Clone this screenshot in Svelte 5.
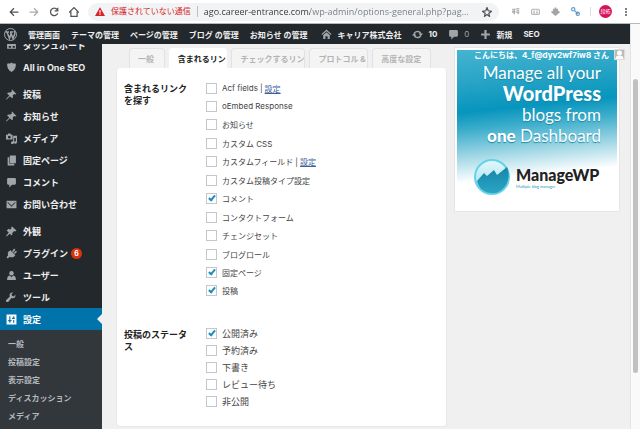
<script>
    let url = $state("ago.career-entrance.com/wp-admin/options-general.php?pag...");

    const adminLinks = ["管理画面", "テーマの管理", "ページの管理", "ブログ の管理", "お知らせ の管理"];

    const menuGroups = [
        [
            { icon: "dashboard", label: "ダッシュボード" },
            { icon: "shield", label: "All in One SEO" }
        ],
        [
            { icon: "pin", label: "投稿" },
            { icon: "pin", label: "お知らせ" },
            { icon: "media", label: "メディア" },
            { icon: "pages", label: "固定ページ" },
            { icon: "comment", label: "コメント" },
            { icon: "mail", label: "お問い合わせ" }
        ],
        [
            { icon: "brush", label: "外観" },
            { icon: "plug", label: "プラグイン", count: 6 },
            { icon: "user", label: "ユーザー" },
            { icon: "wrench", label: "ツール" },
            { icon: "settings", label: "設定", current: true }
        ]
    ];

    const submenu = ["一般", "投稿設定", "表示設定", "ディスカッション", "メディア"];

    const tabs = [
        { label: "一般", size: "short" },
        { label: "含まれるリン", size: "mid" },
        { label: "チェックするリン", size: "long" },
        { label: "プロトコル &", size: "mid" },
        { label: "高度な設定", size: "mid" }
    ];
    let activeTab = $state(1);

    let sources = $state([
        { label: "Acf fields", link: true, checked: false },
        { label: "oEmbed Response", checked: false },
        { label: "お知らせ", checked: false },
        { label: "カスタム CSS", checked: false },
        { label: "カスタムフィールド", link: true, checked: false },
        { label: "カスタム投稿タイプ設定", checked: false },
        { label: "コメント", checked: true },
        { label: "コンタクトフォーム", checked: false },
        { label: "チェンジセット", checked: false },
        { label: "ブログロール", checked: false },
        { label: "固定ページ", checked: true },
        { label: "投稿", checked: true }
    ]);

    let statuses = $state([
        { label: "公開済み", checked: true },
        { label: "予約済み", checked: false },
        { label: "下書き", checked: false },
        { label: "レビュー待ち", checked: false },
        { label: "非公開", checked: false }
    ]);
</script>

{#snippet icon(name)}
    <svg class="icon" viewBox="0 0 20 20" aria-hidden="true">
        {#if name === "dashboard"}
            <path d="M2 3h16v13H2z M5 11h4v3H5z M12 11h4v3h-4z" fill-rule="evenodd" />
        {:else if name === "shield"}
            <path d="M10 1c2 2 5 2 8 2 0 7-2 12-8 15C4 15 2 10 2 3c3 0 6 0 8-2z" />
        {:else if name === "pin"}
            <path d="M11 1l8 8-2 1-2-1-3 3c1 2 1 4-1 5l-4-4-6 6-1-1 6-6-4-4c1-2 4-2 5-1l4-3-1-2z" />
        {:else if name === "media"}
            <path d="M0 3h3l1-2h4l1 2h3v9H0z M6 5a2 2 0 100 5 2 2 0 000-5z" fill-rule="evenodd" />
            <path d="M13 5h7v12c0 4-6 3-5 0 0-1 1-2 3-2V9h-3v8c0 4-6 4-6 1s3-3 4-3z" />
        {:else if name === "pages"}
            <path d="M7 1h11v14H7z M3 4h3v12h9v3H3z" />
        {:else if name === "comment"}
            <path d="M4 2h12c1 0 2 1 2 2v8c0 1-1 2-2 2h-5l-5 5v-5H4c-1 0-2-1-2-2V4c0-1 1-2 2-2z" />
        {:else if name === "mail"}
            <path d="M1 3h18v14H1z M3 5l7 7 7-7v2l-7 7-7-7z" fill-rule="evenodd" />
        {:else if name === "brush"}
            <path d="M11 1l8 7-2 2-2-1-4 4 1 2-2 2-3-3-6 5-1-1 5-6-3-3 2-2 2 1 4-4-1-1z M1 8l4-3 3 2-3 3z" />
        {:else if name === "plug"}
            <path d="M8 4l9 9c-3 4-7 5-10 3l-4 3-2-2 3-4C2 10 4 6 8 4z M11 6l4-5 2 2-4 5z M14 9l4-4 2 2-4 4z" />
        {:else if name === "user"}
            <circle cx="10" cy="6" r="4" />
            <path d="M2 18c0-5 1-7 5-8l3 3 3-3c4 1 5 3 5 8z" />
        {:else if name === "wrench"}
            <path d="M17 5l-3 3-3-1-1-3 3-3c-4-1-8 2-6 7l-7 7c-1 2 2 4 4 3l6-7c5 2 8-2 7-6z" />
        {:else if name === "settings"}
            <path d="M1 1h18v18H1z M6 4v7H4v2h2v3h2v-3h2v-2H8V4z M13 4v3h-2v2h5V7h-1V4z M12 11h3v5h-2v-5z" fill-rule="evenodd" />
        {:else if name === "house"}
            <path d="M10 1l9 8-1 2-8-7-8 7-1-2z M10 6l6 5v7h-4v-5H8v5H4v-7z" />
        {:else if name === "update"}
            <path d="M10 3c4 0 6 2 7 5h3l-4 5-4-5h2c-1-3-7-3-8 0L3 7c1-2 4-4 7-4z M10 17c-4 0-6-2-7-5H0l4-5 4 5H6c1 3 7 3 8 0l3 1c-1 2-4 4-7 4z" />
        {:else if name === "plus"}
            <path d="M8 2h4v6h6v4h-6v6H8v-6H2V8h6z" />
        {/if}
    </svg>
{/snippet}

{#snippet check(item)}
    <div class="option">
        <label>
            <input type="checkbox" bind:checked={item.checked} />
            <span>{item.label}</span>
        </label>
        {#if item.link}
            <span class="bar">|</span><a href="#settings">設定</a>
        {/if}
    </div>
{/snippet}

<div class="window">
    <div class="browser">
        <div class="nav">
            <button aria-label="戻る">
                <svg viewBox="0 0 16 16"><path d="M15 8H2M8 2L2 8l6 6" /></svg>
            </button>
            <button class="dim" aria-label="進む">
                <svg viewBox="0 0 16 16"><path d="M1 8h13M8 2l6 6-6 6" /></svg>
            </button>
            <button aria-label="再読み込み">
                <svg viewBox="0 0 16 16"><path d="M14 10a6 6 0 11-1-6l1 2M14 1v5H9" /></svg>
            </button>
            <button aria-label="ホーム">
                <svg viewBox="0 0 16 16"><path d="M0 9l8-8 8 8M3 7v8h10V7" /></svg>
            </button>
        </div>
        <div class="address">
            <svg class="warn" viewBox="0 0 16 14"><path d="M8 0l8 14H0z" fill="#d8232a" /><path d="M7 5h2v4H7zM7 10h2v2H7z" fill="#fff" /></svg>
            <span class="insecure">保護されていない通信</span>
            <input class="url" type="text" aria-label="アドレス" bind:value={url} />
            <button class="star" aria-label="ブックマーク">
                <svg viewBox="0 0 16 16"><path d="M8 1l2 5 5 1-4 3 1 5-4-3-4 3 1-5-4-3 5-1z" /></svg>
            </button>
        </div>
        <div class="extensions">
            <svg viewBox="0 0 16 16" stroke="#aaa"><path d="M2 4h5l-1 3H2M9 3h6M10 6h4M2 9h5l-2 4M9 9h5l-2 4" /></svg>
            <svg viewBox="0 0 16 16" stroke="#b5b5b5"><rect x="1" y="4" width="14" height="9" rx="2" /><path d="M4 7h3M4 10h3M9 7h3M9 10h3" /></svg>
            <svg viewBox="0 0 16 16" stroke="#a5a5a5"><path d="M8 1v12M5 3v8M11 3v8M1 8l7 6 7-6" stroke-width="3" /></svg>
            <svg viewBox="0 0 16 16"><g stroke="#5a9bd0" stroke-width="2"><circle cx="4" cy="4" r="3" /><path d="M6 6l4 4" /><circle cx="12" cy="12" r="3" /></g><circle cx="11" cy="11" r="1" stroke="#888" /></svg>
        </div>
        <button class="profile">段拓</button>
        <button class="more" aria-label="メニュー">
            <svg viewBox="0 0 4 16"><circle cx="2" cy="2" r="2" /><circle cx="2" cy="8" r="2" /><circle cx="2" cy="14" r="2" /></svg>
        </button>
    </div>

    <div class="page">
        <div class="site">
            <nav class="adminbar">
                <a href="#wp" aria-label="WordPress">
                    <svg class="wp" viewBox="0 0 26 26">
                        <circle cx="13" cy="13" r="12" fill="none" stroke="#a0a5aa" stroke-width="2" />
                        <path d="M3 8h7M12 8h6M6 8l5 13 3-9M13 8l5 13 4-11-2-4" fill="none" stroke="#a0a5aa" stroke-width="3" />
                    </svg>
                </a>
                {#each adminLinks as link}
                    <a href="#top">{link}</a>
                {/each}
                <a href="#home" class="home">{@render icon("house")}キャリア株式会社</a>
                <a href="#update">{@render icon("update")}10</a>
                <a href="#comments" class="quiet">{@render icon("comment")}0</a>
                <a href="#new">{@render icon("plus")}新規</a>
                <a href="#seo">SEO</a>
                <a href="#profile" class="account">
                    こんにちは、4_f@dyv2wf7iw8 さん
                    <svg viewBox="0 0 22 22"><rect width="22" height="22" fill="#ddd" /><path d="M2 2h18v18H2z" fill="#bbb" /><circle cx="11" cy="8" r="5" fill="#fff" /><path d="M3 20c0-5 3-7 8-7s8 2 8 7z" fill="#fff" /></svg>
                </a>
            </nav>

            <div class="body">
                <nav class="sidebar">
                    {#each menuGroups as group}
                        <ul>
                            {#each group as item}
                                <li>
                                    <a href="#menu" class:current={item.current}>
                                        {@render icon(item.icon)}
                                        {item.label}
                                        {#if item.count}
                                            <span class="count">{item.count}</span>
                                        {/if}
                                    </a>
                                </li>
                            {/each}
                        </ul>
                    {/each}
                    <ul class="submenu">
                        {#each submenu as item}
                            <li><a href="#sub">{item}</a></li>
                        {/each}
                    </ul>
                </nav>

                <main>
                    <section class="options">
                        <div class="tabs" role="tablist">
                            {#each tabs as tab, i}
                                <button role="tab" class="tab {tab.size}" class:active={activeTab === i} aria-selected={activeTab === i} onclick={() => activeTab = i}>
                                    <span>{tab.label}</span>
                                </button>
                            {/each}
                        </div>
                        <div class="card">
                            <fieldset class="sources" aria-labelledby="sources-title">
                                <h2 id="sources-title">含まれるリンクを探す</h2>
                                <div class="list">
                                    {#each sources as item}
                                        {@render check(item)}
                                    {/each}
                                </div>
                            </fieldset>
                            <fieldset class="statuses" aria-labelledby="statuses-title">
                                <h2 id="statuses-title">投稿のステータス</h2>
                                <div class="list">
                                    {#each statuses as item}
                                        {@render check(item)}
                                    {/each}
                                </div>
                            </fieldset>
                        </div>
                    </section>

                    <a class="banner" href="#managewp">
                        <span class="pitch">
                            <span>Manage all your</span>
                            <b>WordPress</b>
                            <span>blogs from</span>
                            <span><b>one</b> Dashboard</span>
                        </span>
                        <span class="brand">
                            <svg viewBox="0 0 38 38">
                                <defs>
                                    <linearGradient id="orb" x1="0" y1="0" x2="0" y2="1">
                                        <stop offset="0" stop-color="#e4f8fc" />
                                        <stop offset="1" stop-color="#9bdcec" />
                                    </linearGradient>
                                    <linearGradient id="chart" x1="0" y1="0" x2="0" y2="1">
                                        <stop offset="0" stop-color="#1686a8" />
                                        <stop offset="1" stop-color="#2ba5c4" />
                                    </linearGradient>
                                </defs>
                                <circle cx="19" cy="19" r="17" fill="url(#orb)" stroke="#63d3ea" stroke-width="2" />
                                <path d="M4 23l7-8 3 3 7-6 3 5 10-8c4 9 1 22-11 26C13 36 6 32 4 23z" fill="url(#chart)" />
                            </svg>
                            <span class="name">
                                <strong>ManageWP</strong>
                                <small>Multiple blog manager</small>
                            </span>
                        </span>
                    </a>
                </main>
            </div>
        </div>
        <div class="scrollbar"><div class="thumb"></div></div>
    </div>
</div>

<style>
    :global(body) {
        margin: 0;
        overflow: hidden;
    }

    .window {
        display: flex;
        flex-direction: column;
        height: 100vh;
        overflow: hidden;
        background: #f0f0f0;
        font-family: Inter, "Noto Sans CJK JP", sans-serif;
        font-size: 8px;
        color: #444;
    }

    button {
        padding: 0;
        border: 0;
        background: none;
        font: inherit;
        color: inherit;
    }

    a {
        color: inherit;
        text-decoration: none;
    }

    ul {
        list-style: none;
        margin: 0;
        padding: 0;
    }

    svg {
        display: block;
        flex: none;
    }

    /* browser toolbar */
    .browser {
        display: flex;
        align-items: center;
        flex: none;
        box-sizing: border-box;
        height: 24px;
        padding: 0 13px 0 9px;
        background: #fff;
        border-bottom: 1px solid #b8b8b8;
    }

    .nav {
        display: flex;
        gap: 10px;
        margin-right: 9px;
    }

    .nav svg, .star svg {
        width: 10px;
        height: 10px;
        fill: none;
        stroke: #505357;
        stroke-width: 2;
    }

    .nav .dim svg {
        stroke: #aaa;
    }

    .address {
        display: flex;
        align-items: center;
        flex: 1;
        height: 18px;
        padding: 0 7px;
        border-radius: 9px;
        background: #f1f3f4;
    }

    .warn {
        width: 10px;
        height: 9px;
        margin-right: 6px;
    }

    .insecure {
        color: #d8232a;
        padding-right: 6px;
        border-right: 1px solid #c0c0c0;
        line-height: 11px;
    }

    .url {
        flex: 1;
        min-width: 0;
        margin-left: 6px;
        padding: 0;
        border: 0;
        outline: 0;
        font-family: "Open Sans", sans-serif;
        font-size: 9px;
        line-height: 14px;
        color: transparent;
        /* host dark, path lighter */
        background: linear-gradient(to right, #33363a 106px, #777b80 106px);
        background-clip: text;
    }

    .extensions {
        display: flex;
        gap: 11px;
        margin-left: 12px;
        padding-right: 10px;
        border-right: 1px solid #ddd;
    }

    .extensions svg {
        width: 9px;
        height: 9px;
        fill: none;
        stroke-width: 2;
    }

    .profile {
        width: 13px;
        height: 13px;
        margin: 0 13px 0 8px;
        border-radius: 50%;
        background: #d8125a;
        color: #fff;
        font-size: 5px;
        line-height: 13px;
    }

    .more svg {
        width: 2px;
        height: 8px;
        fill: #505357;
    }

    /* page frame */
    .page {
        display: flex;
        flex: 1;
        min-height: 0;
    }

    .site {
        display: flex;
        flex-direction: column;
        flex: 1;
        min-width: 0;
    }

    .scrollbar {
        flex: none;
        width: 5px;
        padding: 55px 2px 0;
        background: #fafafa;
        border-left: 1px solid #e4e4e4;
    }

    .thumb {
        height: 84%;
        border-radius: 3px;
        background: #c1c1c1;
    }

    /* admin bar */
    .adminbar {
        position: relative;
        display: flex;
        align-items: center;
        flex: none;
        gap: 11px;
        height: 20px;
        padding-left: 4px;
        background: #23282d;
        color: #eee;
        font-weight: 700;
        white-space: nowrap;
    }

    .adminbar a {
        display: flex;
        align-items: center;
        gap: 5px;
    }

    .adminbar .home {
        margin-left: 3px;
    }

    .adminbar .quiet {
        color: #a0a5aa;
        font-weight: 400;
    }

    .wp {
        width: 13px;
        height: 13px;
    }

    .icon {
        width: 11px;
        height: 11px;
        fill: #a0a5aa;
    }

    .adminbar .account {
        position: absolute;
        top: 25px;
        right: 5px;
        color: #fff;
    }

    .account svg {
        width: 11px;
        height: 11px;
    }

    /* sidebar */
    .body {
        display: flex;
        flex: 1;
        min-height: 0;
        overflow: hidden;
    }

    .sidebar {
        display: flex;
        flex-direction: column;
        flex: none;
        gap: 5px;
        width: 102px;
        margin-top: -10px;
        background: #23282d;
        color: #eee;
        font-size: 9px;
        font-weight: 700;
    }

    .sidebar a {
        position: relative;
        display: flex;
        align-items: center;
        gap: 6px;
        height: 22px;
        padding-left: 6px;
        white-space: nowrap;
    }

    .sidebar .current {
        background: #0073aa;
        color: #fff;
    }

    .current .icon {
        fill: #fff;
    }

    .current::after {
        content: "";
        position: absolute;
        right: 0;
        top: 6px;
        border: 5px solid transparent;
        border-right-color: #f0f0f0;
        border-left: 0;
    }

    .count {
        width: 11px;
        height: 11px;
        margin-left: -3px;
        border-radius: 50%;
        background: #d8340d;
        color: #fff;
        font-size: 7px;
        line-height: 11px;
        text-align: center;
    }

    .submenu {
        flex: 1;
        margin-top: -5px;
        padding-top: 4px;
        background: #32373c;
        color: #b4b9be;
        font-size: 8px;
    }

    .submenu a {
        height: 18px;
        padding-left: 8px;
    }

    /* settings panel */
    main {
        display: flex;
        align-items: flex-start;
        flex: 1;
        gap: 8px;
        min-width: 0;
        padding: 4px 11px 0 14px;
    }

    .options {
        flex: 1;
        min-width: 0;
    }

    .tabs {
        display: flex;
        gap: 4px;
        padding: 0 16px 0 13px;
    }

    .tab {
        box-sizing: border-box;
        height: 20px;
        border: 1px solid #e2e2e2;
        border-bottom: 0;
        border-radius: 4px 4px 0 0;
        background: #f4f4f4;
        color: #b4b4b4;
        font-weight: 700;
        text-align: left;
        white-space: nowrap;
    }

    .tab span {
        padding-left: 8px;
    }

    .tab.short {
        flex: 35;
    }

    .tab.mid {
        flex: 59;
    }

    .tab.long {
        flex: 74;
    }

    .tab.active {
        background: #fff;
        border-color: #fff;
        color: #222;
    }

    .card {
        padding: 11px 7px 16px;
        border: 1px solid #e8e8e8;
        border-top: 0;
        border-radius: 4px;
        background: #fff;
    }

    fieldset {
        display: flex;
        gap: 16px;
        margin: 0;
        padding: 0;
        border: 0;
    }

    h2 {
        width: 66px;
        margin: 4px 0 0;
        color: #222;
        font-size: 9px;
        font-weight: 700;
        line-height: 12px;
        word-break: break-all;
    }

    .list {
        display: flex;
        flex-direction: column;
        justify-content: space-between;
        flex: 1;
    }

    .sources {
        margin-bottom: 25px;
    }

    .sources .list {
        min-height: 221px;
    }

    .option {
        display: flex;
        align-items: center;
        height: 18px;
        white-space: nowrap;
    }

    .statuses .option {
        height: 17px;
        font-size: 9px;
    }

    .option label {
        display: flex;
        align-items: center;
        gap: 5px;
    }

    .option a {
        color: #3a5f9a;
        text-decoration: underline;
    }

    .bar {
        margin: 0 2px;
    }

    input[type="checkbox"] {
        appearance: none;
        position: relative;
        box-sizing: border-box;
        width: 11px;
        height: 11px;
        margin: 0;
        border: 1px solid #c4c8cc;
        background: #fff;
    }

    input[type="checkbox"]:checked::before {
        content: "";
        position: absolute;
        left: 3px;
        top: 0;
        width: 2px;
        height: 5px;
        border: solid #1e8cbe;
        border-width: 0 2px 2px 0;
        transform: rotate(40deg);
    }

    /* promotion */
    .banner {
        display: flex;
        flex-direction: column;
        flex: none;
        box-sizing: border-box;
        width: 164px;
        height: 163px;
        padding: 12px 16px 0;
        border: 2px solid #fff;
        outline: 1px solid #e6e6e6;
        background: linear-gradient(174deg, #45b4d0 0%, #2aa5c7 18%, #0795bd 36%, #3badcb 46%, #a5d9e6 62%, #fff 76%);
        color: #fff;
        font-family: Lato, sans-serif;
    }

    .pitch {
        display: flex;
        flex-direction: column;
        align-items: flex-end;
        font-size: 17px;
        line-height: 21px;
        text-shadow: 0 1px 1px #1688a8;
        white-space: nowrap;
    }

    .pitch b {
        font-weight: 900;
    }

    .pitch > b {
        font-size: 20px;
    }

    .brand {
        display: flex;
        align-items: center;
        gap: 5px;
        margin-top: 12px;
    }

    .brand svg {
        width: 38px;
        height: 38px;
    }

    .name {
        display: flex;
        flex-direction: column;
        color: #222;
    }

    .name strong {
        font-size: 16px;
        font-weight: 900;
        line-height: 19px;
    }

    .name small {
        color: #2499bd;
        font-size: 4px;
        line-height: 5px;
    }
</style>
